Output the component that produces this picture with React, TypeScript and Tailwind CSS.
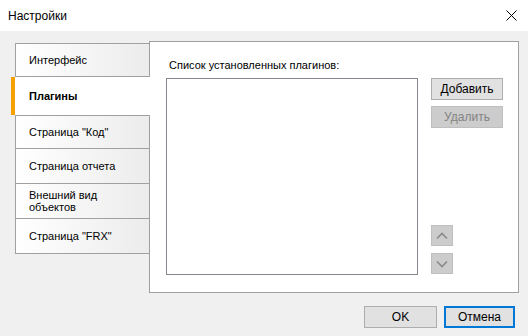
import React from "react";

const font = { fontFamily: '"Liberation Sans", Arial, sans-serif' };

function Tab({ label, cls, twoLine }: { label: React.ReactNode; cls: string; twoLine?: boolean }) {
  return (
    <div
      className={`flex items-center pl-[13px] border-[#a0a0a0] bg-gradient-to-r from-white to-[#ececec] text-[11px] text-black ${cls} ${twoLine ? "leading-[12px]" : ""}`}
    >
      {label}
    </div>
  );
}

export default function App() {
  return (
    <div className="w-[528px] h-[336px] bg-[#f0f0f0] flex flex-col overflow-hidden" style={font}>
      {/* Title bar */}
      <div className="h-[31px] bg-white flex items-center justify-between pl-[8px] pr-[11px] shrink-0">
        <span className="text-[12px] text-black">Настройки</span>
        <svg width="11" height="11" viewBox="0 0 11 11">
          <path d="M0.5 0.5 L10.5 10.5 M10.5 0.5 L0.5 10.5" stroke="#000" strokeWidth="1" />
        </svg>
      </div>

      {/* Main */}
      <div className="flex pt-[10px] pl-[15px]">
        <div className="w-[135px] pt-[2px] flex flex-col relative z-10">
          <Tab label="Интерфейс" cls="h-[34px] border" />
          <div className="h-[38px] -ml-[4px] w-[139px] bg-white flex items-center pl-[14px] border-l-[4px] border-[#f6a100] text-[11px] font-bold text-black">
            Плагины
          </div>
          <Tab label="Страница &quot;Код&quot;" cls="h-[33px] border-t border-x" />
          <Tab label="Страница отчета" cls="h-[35px] border-t border-x" />
          <Tab
            twoLine
            label={
              <span className="block -mt-[1px]">
                Внешний вид
                <br />
                объектов
              </span>
            }
            cls="h-[35px] border-t border-x"
          />
          <Tab label="Страница &quot;FRX&quot;" cls="h-[36px] border" />
        </div>

        <div className="-ml-[1px] w-[370px] h-[252px] bg-white border border-[#a0a0a0] flex">
          <div className="flex flex-col pl-[16px] pt-[17px]">
            <span className="pl-[3px] text-[11px] leading-[13px] text-black">Список установленных плагинов:</span>
            <div className="mt-[6px] w-[252px] h-[197px] border border-[#828790] bg-white" />
          </div>
          <div className="flex flex-col ml-[13px] pt-[36px]">
            <button className="w-[72px] h-[22px] bg-[#e1e1e1] border border-[#adadad] text-[12px] text-black flex items-center justify-center">
              Добавить
            </button>
            <button className="mt-[6px] w-[72px] h-[22px] bg-[#cccccc] border border-[#bfbfbf] text-[12px] text-[#838383] flex items-center justify-center">
              Удалить
            </button>
            <div className="mt-[97px] w-[22px] h-[21px] bg-[#cccccc] border border-[#bfbfbf] flex items-center justify-center">
              <svg width="12" height="8" viewBox="0 0 12 8">
                <path d="M1 6.5 L6 1.5 L11 6.5" stroke="#8a8a8a" strokeWidth="1.6" fill="none" />
              </svg>
            </div>
            <div className="mt-[7px] w-[22px] h-[21px] bg-[#cccccc] border border-[#bfbfbf] flex items-center justify-center">
              <svg width="12" height="8" viewBox="0 0 12 8">
                <path d="M1 1.5 L6 6.5 L11 1.5" stroke="#8a8a8a" strokeWidth="1.6" fill="none" />
              </svg>
            </div>
          </div>
        </div>
      </div>

      {/* Bottom buttons */}
      <div className="flex justify-end pr-[13px] pt-[13px] gap-[7px]">
        <button className="w-[73px] h-[22px] bg-[#e1e1e1] border border-[#adadad] text-[12px] text-black flex items-center justify-center">
          OK
        </button>
        <button className="w-[71px] h-[22px] bg-[#e1e1e1] border-2 border-[#0078d7] text-[12px] text-black flex items-center justify-center">
          Отмена
        </button>
      </div>
    </div>
  );
}
